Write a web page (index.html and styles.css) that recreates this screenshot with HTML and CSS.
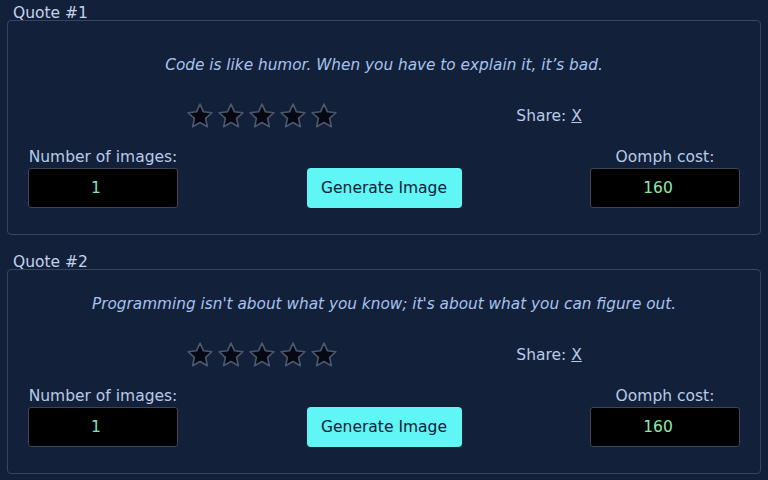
FILE: index.html
```html
<!doctype html>
<html lang="en">
	<head>
		<meta charset="UTF-8">
		<title>Quotes</title>
		<link rel="stylesheet" href="styles.css">
	</head>
	<body>
		<div class="quote">
			<div class="titre">Quote #1</div>
			<div class="cadre">
				<p class="texte">Code is like humor. When you have to explain it, it’s bad.</p>
				<div class="ligne">
					<div class="etoiles">
						<svg class="etoile" viewBox="0 0 24 24"><path d="M12 1.8l3 6.6 7.2.8-5.4 4.9 1.5 7.1L12 17.6l-6.3 3.6 1.5-7.1L1.8 9.2 9 8.4z"/></svg>
						<svg class="etoile" viewBox="0 0 24 24"><path d="M12 1.8l3 6.6 7.2.8-5.4 4.9 1.5 7.1L12 17.6l-6.3 3.6 1.5-7.1L1.8 9.2 9 8.4z"/></svg>
						<svg class="etoile" viewBox="0 0 24 24"><path d="M12 1.8l3 6.6 7.2.8-5.4 4.9 1.5 7.1L12 17.6l-6.3 3.6 1.5-7.1L1.8 9.2 9 8.4z"/></svg>
						<svg class="etoile" viewBox="0 0 24 24"><path d="M12 1.8l3 6.6 7.2.8-5.4 4.9 1.5 7.1L12 17.6l-6.3 3.6 1.5-7.1L1.8 9.2 9 8.4z"/></svg>
						<svg class="etoile" viewBox="0 0 24 24"><path d="M12 1.8l3 6.6 7.2.8-5.4 4.9 1.5 7.1L12 17.6l-6.3 3.6 1.5-7.1L1.8 9.2 9 8.4z"/></svg>
					</div>
					<div class="partage">Share: <a href="#">X</a></div>
				</div>
				<div class="bas">
					<div class="champ">
						<label>Number of images:</label>
						<input class="nombre" type="text" value="1">
					</div>
					<input class="bouton" type="button" value="Generate Image">
					<div class="champ">
						<label>Oomph cost:</label>
						<input class="nombre cout" type="text" value="160" readonly>
					</div>
				</div>
			</div>
		</div>
		<div class="quote">
			<div class="titre">Quote #2</div>
			<div class="cadre">
				<p class="texte">Programming isn't about what you know; it's about what you can figure out.</p>
				<div class="ligne">
					<div class="etoiles">
						<svg class="etoile" viewBox="0 0 24 24"><path d="M12 1.8l3 6.6 7.2.8-5.4 4.9 1.5 7.1L12 17.6l-6.3 3.6 1.5-7.1L1.8 9.2 9 8.4z"/></svg>
						<svg class="etoile" viewBox="0 0 24 24"><path d="M12 1.8l3 6.6 7.2.8-5.4 4.9 1.5 7.1L12 17.6l-6.3 3.6 1.5-7.1L1.8 9.2 9 8.4z"/></svg>
						<svg class="etoile" viewBox="0 0 24 24"><path d="M12 1.8l3 6.6 7.2.8-5.4 4.9 1.5 7.1L12 17.6l-6.3 3.6 1.5-7.1L1.8 9.2 9 8.4z"/></svg>
						<svg class="etoile" viewBox="0 0 24 24"><path d="M12 1.8l3 6.6 7.2.8-5.4 4.9 1.5 7.1L12 17.6l-6.3 3.6 1.5-7.1L1.8 9.2 9 8.4z"/></svg>
						<svg class="etoile" viewBox="0 0 24 24"><path d="M12 1.8l3 6.6 7.2.8-5.4 4.9 1.5 7.1L12 17.6l-6.3 3.6 1.5-7.1L1.8 9.2 9 8.4z"/></svg>
					</div>
					<div class="partage">Share: <a href="#">X</a></div>
				</div>
				<div class="bas">
					<div class="champ">
						<label>Number of images:</label>
						<input class="nombre" type="text" value="1">
					</div>
					<input class="bouton" type="button" value="Generate Image">
					<div class="champ">
						<label>Oomph cost:</label>
						<input class="nombre cout" type="text" value="160" readonly>
					</div>
				</div>
			</div>
		</div>
	</body>
</html>
```
FILE: styles.css
```css
body
{
	margin: 0;
	padding: 6px 7px 0 7px;
	background: #13203a;
	color: #b8cbe7;
	font-family: "DejaVu Sans", sans-serif;
	font-size: 15.5px;
}
.quote
{
	margin-bottom: 20px;
}
.titre
{
	padding-left: 6px;
	line-height: 14px;
	color: #c4d3ea;
}
.cadre
{
	border: 1px solid #34465f;
	border-radius: 4px;
	padding: 0 20px 26px 20px;
}
.texte
{
	margin: 24px 0 0 0;
	text-align: center;
	font-style: italic;
	font-size: 15.3px;
	color: #a6c3ee;
	line-height: 20px;
}
.quote:first-child .texte
{
	margin-top: 34px;
}
.ligne
{
	display: flex;
	justify-content: space-evenly;
	align-items: center;
	margin: 27px -20px 0 -20px;
}
.etoiles
{
	display: flex;
	gap: 3px;
}
.etoile
{
	width: 28px;
	height: 28px;
	fill: #060914;
	stroke: #4b5870;
	stroke-width: 1.4;
	stroke-linejoin: round;
}
.partage a
{
	color: #b8cbe7;
}
.bas
{
	display: flex;
	justify-content: space-between;
	align-items: flex-end;
	margin-top: 18px;
}
.champ
{
	display: flex;
	flex-direction: column;
	align-items: center;
	gap: 2px;
}
.nombre
{
	width: 150px;
	height: 40px;
	box-sizing: border-box;
	padding: 0 16px 0 2px;
	background: #000;
	border: 1px solid #3c4656;
	border-radius: 3px;
	color: #7fe4c3;
	text-align: center;
	font-family: "DejaVu Sans", sans-serif;
	font-size: 15.5px;
}
.cout
{
	color: #8de9a9;
}
.bouton
{
	width: 155px;
	height: 40px;
	background: #5ff6f5;
	border: none;
	border-radius: 4px;
	color: #10203a;
	font-family: "DejaVu Sans", sans-serif;
	font-size: 15.5px;
}
```
